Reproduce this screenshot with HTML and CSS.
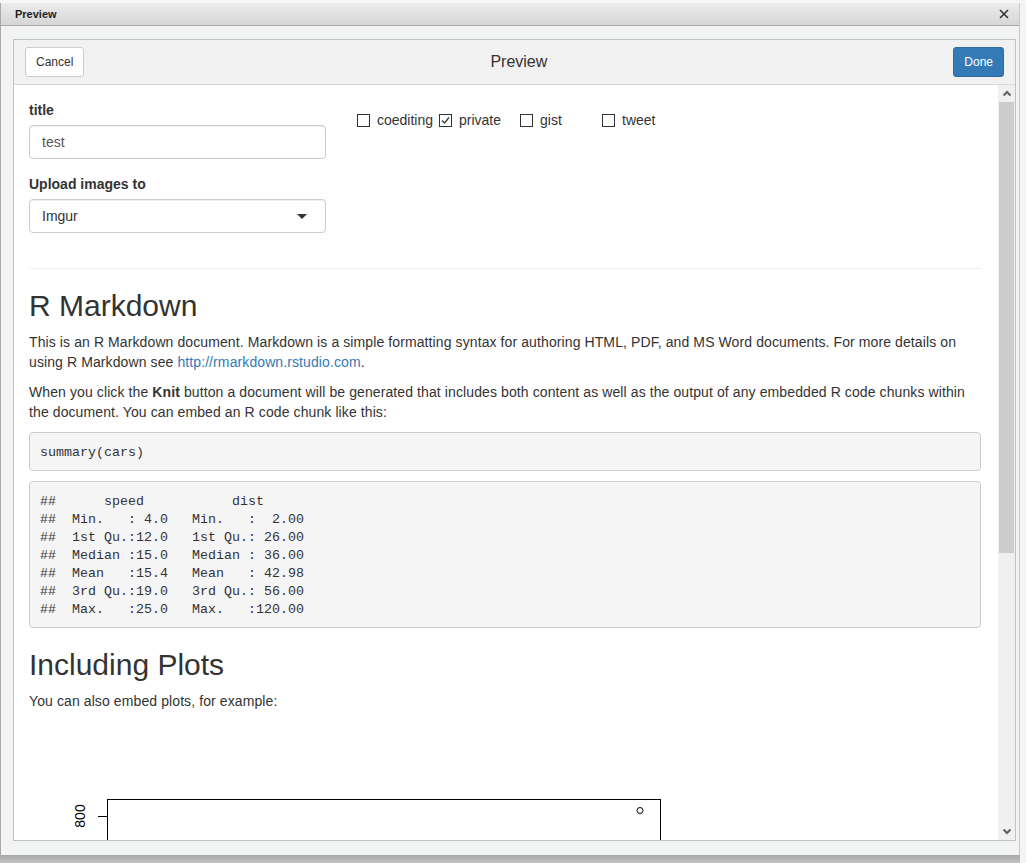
FILE: index.html
```html
<!DOCTYPE html>
<html>
<head>
<meta charset="utf-8">
<link rel="stylesheet" href="styles.css">
</head>
<body>
<div class="topstrip"></div>
<div class="dialog">
  <div class="titlebar">
    <span class="titlebar-text">Preview</span>
    <svg class="close" width="10" height="10" viewBox="0 0 10 10"><path d="M1 1 L9 9 M9 1 L1 9" stroke="#333" stroke-width="1.6" fill="none"/></svg>
  </div>
  <div class="dialog-body">
    <div class="frame">
      <div class="header">
        <button class="btn btn-default">Cancel</button>
        <div class="header-title">Preview</div>
        <button class="btn btn-primary">Done</button>
      </div>
      <div class="viewport">
        <div class="content">
          <div class="form-row">
            <div class="form-left">
              <div class="form-group">
                <label class="lbl">title</label>
                <div class="input">test</div>
              </div>
              <div class="form-group">
                <label class="lbl">Upload images to</label>
                <div class="input select">Imgur<span class="caret"></span></div>
              </div>
            </div>
            <div class="checks">
              <div class="check"><span class="box"></span>coediting</div>
              <div class="check"><span class="box"><svg width="11" height="11" viewBox="0 0 11 11"><path d="M2 5.5 L4.5 8 L9 2.5" stroke="#333" stroke-width="1.2" fill="none"/></svg></span>private</div>
              <div class="check"><span class="box"></span>gist</div>
              <div class="check"><span class="box"></span>tweet</div>
            </div>
          </div>
          <hr class="rule">
          <h1 class="heading">R Markdown</h1>
          <p class="para">This is an R Markdown document. Markdown is a simple formatting syntax for authoring HTML, PDF, and MS Word documents. For more details on using R Markdown see <a class="link" href="#">http://rmarkdown.rstudio.com</a>.</p>
          <p class="para">When you click the <strong>Knit</strong> button a document will be generated that includes both content as well as the output of any embedded R code chunks within the document. You can embed an R code chunk like this:</p>
          <pre class="code">summary(cars)</pre>
          <pre class="code output">##      speed           dist       
##  Min.   : 4.0   Min.   :  2.00  
##  1st Qu.:12.0   1st Qu.: 26.00  
##  Median :15.0   Median : 36.00  
##  Mean   :15.4   Mean   : 42.98  
##  3rd Qu.:19.0   3rd Qu.: 56.00  
##  Max.   :25.0   Max.   :120.00  </pre>
          <h2 class="heading">Including Plots</h2>
          <p class="para">You can also embed plots, for example:</p>
          <svg class="plot" width="952" height="200" viewBox="0 0 952 200">
            <rect x="78.5" y="78.5" width="553" height="140" fill="none" stroke="#000" stroke-width="1"/>
            <line x1="69" y1="95.5" x2="78" y2="95.5" stroke="#000" stroke-width="1"/>
            <text x="56" y="95" transform="rotate(-90 56 95)" text-anchor="middle" font-family="Liberation Sans, Arial, sans-serif" font-size="14" fill="#000">800</text>
            <circle cx="611" cy="89.5" r="3" fill="none" stroke="#000" stroke-width="1"/>
          </svg>
        </div>
        <div class="scrollbar">
          <div class="sb-arrow"><svg width="10" height="7" viewBox="0 0 10 7"><path d="M1.5 5.5 L5 2 L8.5 5.5" stroke="#606060" stroke-width="2" fill="none"/></svg></div>
          <div class="sb-track"><div class="sb-thumb"></div></div>
          <div class="sb-arrow"><svg width="10" height="7" viewBox="0 0 10 7"><path d="M1.5 1.5 L5 5 L8.5 1.5" stroke="#606060" stroke-width="2" fill="none"/></svg></div>
        </div>
      </div>
    </div>
  </div>
</div>
<div class="shadow"></div>
</body>
</html>
```
FILE: styles.css
```css
html, body {
  margin: 0;
  padding: 0;
}
body {
  width: 1026px;
  height: 863px;
  overflow: hidden;
  background: #f4f4f4;
  font-family: "Liberation Sans", Arial, sans-serif;
  color: #333;
}
.topstrip {
  height: 3px;
  background: #f7f7f7;
}
.dialog {
  width: 1020px;
  border-left: 1px solid #a9a9a9;
  border-right: 1px solid #c8c8c8;
  background: #f2f3f3;
  box-sizing: border-box;
}
.titlebar {
  height: 23px;
  box-sizing: border-box;
  background: linear-gradient(#ececec, #d6d6d6);
  border-bottom: 1px solid #a8a8a8;
  display: flex;
  align-items: center;
  justify-content: space-between;
  padding: 0 10px 0 14px;
}
.titlebar-text {
  font-size: 11px;
  font-weight: bold;
  color: #222;
}
.close {
  display: block;
}
.dialog-body {
  padding: 13px 4px 14px 12px;
}
.frame {
  width: 1003px;
  height: 802px;
  box-sizing: border-box;
  border: 1px solid #c0c0c0;
  background: #fff;
  display: flex;
  flex-direction: column;
}
.header {
  height: 45px;
  box-sizing: border-box;
  background: #f1f1f1;
  border-bottom: 1px solid #d9d9d9;
  padding: 7px 11px;
  display: flex;
  align-items: center;
  justify-content: space-between;
}
.header-title {
  font-size: 16px;
  color: #333;
}
.btn {
  font-family: "Liberation Sans", Arial, sans-serif;
  font-size: 12px;
  line-height: 18px;
  padding: 5px 10px;
  border-radius: 3px;
  border: 1px solid #ccc;
  cursor: pointer;
}
.btn-default {
  background: #fff;
  color: #333;
}
.btn-primary {
  background: #337ab7;
  border-color: #2e6da4;
  color: #fff;
}
.viewport {
  flex: 1;
  display: flex;
  overflow: hidden;
}
.content {
  width: 984px;
  box-sizing: border-box;
  padding: 15px 17px 0 15px;
  overflow: hidden;
  font-size: 14px;
  line-height: 20px;
}
.form-row {
  display: flex;
  gap: 31px;
}
.form-left {
  width: 297px;
}
.form-group {
  margin-bottom: 15px;
}
.lbl {
  display: block;
  font-weight: bold;
  margin-bottom: 5px;
}
.input {
  height: 34px;
  box-sizing: border-box;
  border: 1px solid #ccc;
  border-radius: 4px;
  padding: 6px 12px;
  color: #555;
  box-shadow: inset 0 1px 1px rgba(0,0,0,.075);
}
.select {
  color: #333;
  display: flex;
  justify-content: space-between;
  align-items: center;
}
.caret {
  width: 0;
  height: 0;
  border-left: 5px solid transparent;
  border-right: 5px solid transparent;
  border-top: 5px solid #333;
  margin-right: 6px;
}
.checks {
  display: grid;
  grid-template-columns: 82px 81px 82px 82px;
  margin-top: 10px;
  align-self: flex-start;
}
.check {
  display: flex;
  align-items: center;
  gap: 7px;
  height: 20px;
  white-space: nowrap;
}
.box {
  width: 13px;
  height: 13px;
  box-sizing: border-box;
  border: 1px solid #333;
  display: flex;
  align-items: center;
  justify-content: center;
  flex: none;
}
.box svg {
  display: block;
}
.rule {
  border: 0;
  border-top: 1px solid #eee;
  margin: 20px 0;
}
.heading {
  font-size: 30px;
  font-weight: 500;
  line-height: 33px;
  margin: 20px 0 10px;
  color: #333;
}
.para {
  margin: 0 0 10px;
  letter-spacing: 0.1px;
}
.link {
  color: #337ab7;
  text-decoration: none;
}
.code {
  font-family: "Liberation Mono", "Courier New", monospace;
  font-size: 13.33px;
  line-height: 18px;
  background: #f5f5f5;
  border: 1px solid #ccc;
  border-radius: 4px;
  padding: 10.5px 10px 8.5px;
  margin: 0 0 10px;
  color: #333;
  white-space: pre;
}
.plot {
  display: block;
}
.scrollbar {
  width: 17px;
  background: #f0f0f0;
  display: flex;
  flex-direction: column;
}
.sb-arrow {
  height: 17px;
  display: flex;
  align-items: center;
  justify-content: center;
}
.sb-track {
  flex: 1;
}
.sb-thumb {
  height: 451px;
  background: #cdcdcd;
  margin: 0 1px;
}
.shadow {
  height: 8px;
  width: 1020px;
  background: linear-gradient(#a8a8a8, #c4c4c4);
}
```
